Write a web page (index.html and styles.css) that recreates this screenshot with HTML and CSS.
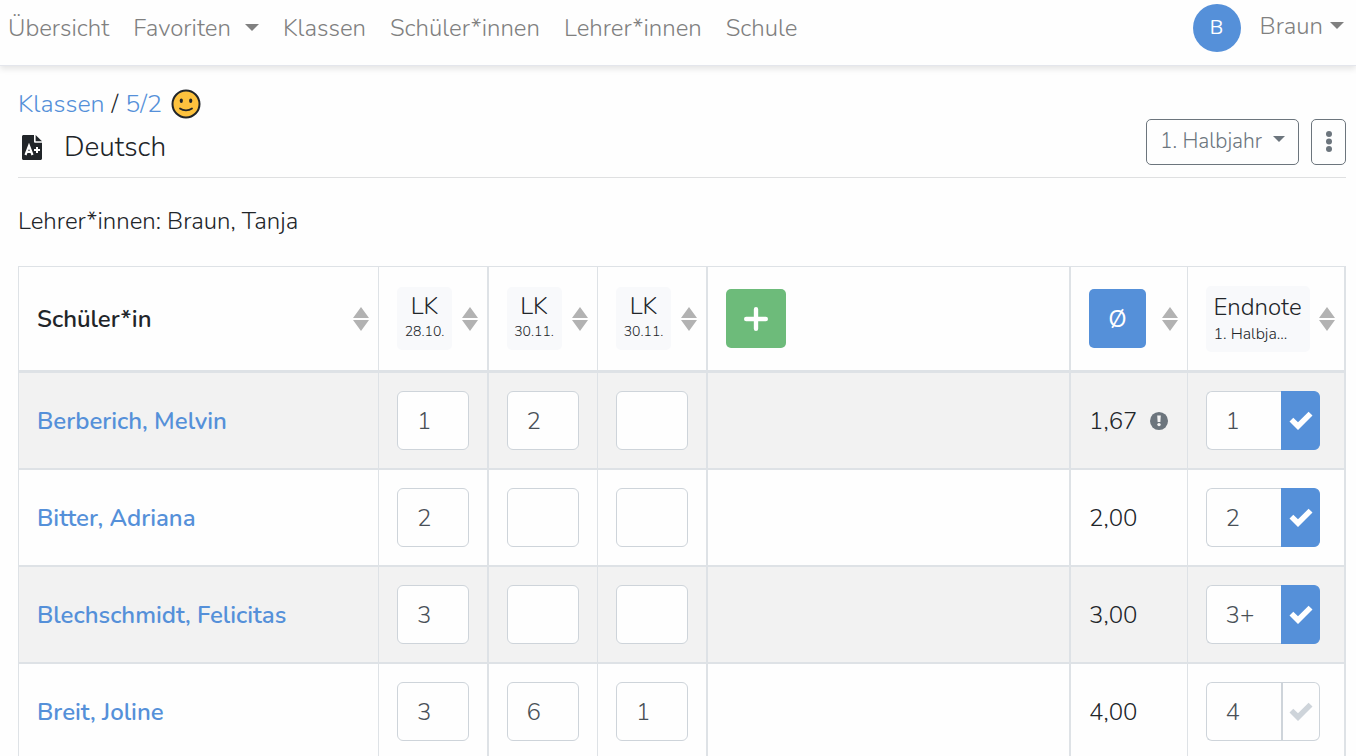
FILE: index.html
```
<!DOCTYPE html>
<html lang="de">
<head>
  <meta charset="UTF-8" />
  <meta name="viewport" content="width=device-width, initial-scale=1.0"/>
  <title>Deutsch - Klasse 5/2</title>
  <link rel="stylesheet" href="styles.css">
</head>
<body>
  <!-- shared icons -->
  <svg class="sprite" aria-hidden="true">
    <symbol id="icon-check" viewBox="0 0 24 20">
      <path d="M.5 10.500L4.300 6.700l4.700 4.600L19.600.700l3.900 3.900L9 19z"/>
    </symbol>
    <symbol id="icon-sort" viewBox="0 0 16 24">
      <path d="M8 0l8 11H0zM8 24L0 13h16z"/>
    </symbol>
  </svg>

  <nav class="navbar">
    <a href="#" class="nav-link">Übersicht</a>
    <a href="#" class="nav-link dropdown">Favoriten</a>
    <a href="#" class="nav-link">Klassen</a>
    <a href="#" class="nav-link">Schüler*innen</a>
    <a href="#" class="nav-link">Lehrer*innen</a>
    <a href="#" class="nav-link">Schule</a>
    <div class="user">
      <span class="avatar">B</span>
      <a href="#" class="nav-link user-link">Braun</a>
    </div>
  </nav>

  <main class="content">
    <header class="page-header">
      <div class="titles">
        <div class="breadcrumb">
          <a href="#">Klassen</a>
          <span>/</span>
          <a href="#">5/2</a>
          <svg class="smiley" viewBox="0 0 30 30" aria-hidden="true">
            <circle cx="15" cy="15" r="13.5" fill="#fdc23e" stroke="#212529" stroke-width="2"/>
            <ellipse cx="10.3" cy="11.8" rx="1.6" ry="2.3" fill="#212529"/>
            <ellipse cx="19.7" cy="11.8" rx="1.6" ry="2.3" fill="#212529"/>
            <path d="M9 19.5c3.4 2.6 8.6 2.6 12 0" fill="none" stroke="#212529" stroke-width="1.8" stroke-linecap="round"/>
          </svg>
        </div>
        <h1>
          <svg class="subject-icon" viewBox="0 0 20 25" aria-hidden="true">
            <path d="M1.500 0H12v6.500c0 .8.500 1.300 1.300 1.300H20v15.700c0 .8-.7 1.500-1.500 1.500h-17C.7 25 0 24.300 0 23.500v-22C0 .7.7 0 1.500 0z" fill="#212529"/>
            <path d="M13.600 0l6.400 6.300h-6.400z" fill="#212529"/>
            <path d="M3.500 20L7 10.800 10.500 20M4.800 17h4.400" fill="none" stroke="#fff" stroke-width="2.200"/>
            <path d="M15 12v6M12 15h6" stroke="#fff" stroke-width="2"/>
          </svg>
          Deutsch
        </h1>
      </div>
      <div class="actions">
        <div class="select-wrap">
          <select aria-label="Halbjahr">
            <option>1. Halbjahr</option>
            <option>2. Halbjahr</option>
          </select>
        </div>
        <button class="btn-more" aria-label="Mehr">
          <svg viewBox="0 0 6 22" aria-hidden="true"><circle cx="3" cy="3" r="3"/><circle cx="3" cy="10.500" r="3"/><circle cx="3" cy="18" r="3"/></svg>
        </button>
      </div>
    </header>

    <p class="teachers">Lehrer*innen: Braun, Tanja</p>

    <table class="grades">
      <colgroup>
        <col class="col-name">
        <col class="col-grade">
        <col class="col-grade-wide">
        <col class="col-grade">
        <col>
        <col class="col-average">
        <col class="col-final">
      </colgroup>
      <thead>
        <tr>
          <th>
            <div class="head">Schüler*in
              <button class="sort" aria-label="Sortieren"><svg><use href="#icon-sort"/></svg></button>
            </div>
          </th>
          <th class="thick">
            <div class="head">
              <button class="exam">LK<small>28.10.</small></button>
              <button class="sort" aria-label="Sortieren"><svg><use href="#icon-sort"/></svg></button>
            </div>
          </th>
          <th>
            <div class="head">
              <button class="exam">LK<small>30.11.</small></button>
              <button class="sort" aria-label="Sortieren"><svg><use href="#icon-sort"/></svg></button>
            </div>
          </th>
          <th class="thick">
            <div class="head">
              <button class="exam">LK<small>30.11.</small></button>
              <button class="sort" aria-label="Sortieren"><svg><use href="#icon-sort"/></svg></button>
            </div>
          </th>
          <th class="thick">
            <div class="head">
              <button class="btn-add" aria-label="Hinzufügen">
                <svg viewBox="0 0 22 22" aria-hidden="true"><path d="M11 2v18M2 11h18" stroke="#fff" stroke-width="4" stroke-linecap="round"/></svg>
              </button>
            </div>
          </th>
          <th>
            <div class="head">
              <button class="btn-average">Ø</button>
              <button class="sort" aria-label="Sortieren"><svg><use href="#icon-sort"/></svg></button>
            </div>
          </th>
          <th class="thick">
            <div class="head">
              <button class="exam final">Endnote<small>1. Halbja...</small></button>
              <button class="sort" aria-label="Sortieren"><svg><use href="#icon-sort"/></svg></button>
            </div>
          </th>
        </tr>
      </thead>
      <tbody>
        <tr>
          <td><a href="#">Berberich, Melvin</a></td>
          <td class="thick"><input type="text" value="1" aria-label="LK 28.10."></td>
          <td><input type="text" value="2" aria-label="LK 30.11."></td>
          <td class="thick"><input type="text" value="" aria-label="LK 30.11."></td>
          <td class="thick"></td>
          <td>
            <div class="average">1,67
              <svg class="info" viewBox="0 0 20 20" aria-hidden="true">
                <circle cx="10" cy="10" r="10" fill="#6c757d"/>
                <path d="M8 4h4l-.5 7h-3z" fill="#f2f2f2"/>
                <circle cx="10" cy="14" r="1.900" fill="#f2f2f2"/>
              </svg>
            </div>
          </td>
          <td class="thick">
            <div class="input-group">
              <input type="text" value="1" aria-label="Endnote">
              <button class="confirm active" aria-label="Bestätigen"><svg><use href="#icon-check"/></svg></button>
            </div>
          </td>
        </tr>
        <tr>
          <td><a href="#">Bitter, Adriana</a></td>
          <td class="thick"><input type="text" value="2" aria-label="LK 28.10."></td>
          <td><input type="text" value="" aria-label="LK 30.11."></td>
          <td class="thick"><input type="text" value="" aria-label="LK 30.11."></td>
          <td class="thick"></td>
          <td><div class="average">2,00</div></td>
          <td class="thick">
            <div class="input-group">
              <input type="text" value="2" aria-label="Endnote">
              <button class="confirm active" aria-label="Bestätigen"><svg><use href="#icon-check"/></svg></button>
            </div>
          </td>
        </tr>
        <tr>
          <td><a href="#">Blechschmidt, Felicitas</a></td>
          <td class="thick"><input type="text" value="3" aria-label="LK 28.10."></td>
          <td><input type="text" value="" aria-label="LK 30.11."></td>
          <td class="thick"><input type="text" value="" aria-label="LK 30.11."></td>
          <td class="thick"></td>
          <td><div class="average">3,00</div></td>
          <td class="thick">
            <div class="input-group">
              <input type="text" value="3+" aria-label="Endnote">
              <button class="confirm active" aria-label="Bestätigen"><svg><use href="#icon-check"/></svg></button>
            </div>
          </td>
        </tr>
        <tr>
          <td><a href="#">Breit, Joline</a></td>
          <td class="thick"><input type="text" value="3" aria-label="LK 28.10."></td>
          <td><input type="text" value="6" aria-label="LK 30.11."></td>
          <td class="thick"><input type="text" value="1" aria-label="LK 30.11."></td>
          <td class="thick"></td>
          <td><div class="average">4,00</div></td>
          <td class="thick">
            <div class="input-group">
              <input type="text" value="4" aria-label="Endnote">
              <button class="confirm" aria-label="Bestätigen"><svg><use href="#icon-check"/></svg></button>
            </div>
          </td>
        </tr>
      </tbody>
    </table>
  </main>
</body>
</html>
```

FILE: styles.css
```
* {
  box-sizing: border-box;
}

html {
  scrollbar-width: none;
}

body {
  margin: 0;
  background-color: #fefefe;
  color: #212529;
  font-family: Nunito, "Open Sans", sans-serif;
  font-size: 24px;
  font-weight: 300;
  line-height: 36px;
}

a {
  color: #5590d9;
  text-decoration: none;
}

button,
input,
select {
  margin: 0;
  font: inherit;
  color: inherit;
}

button {
  padding: 0;
  border: none;
  background: none;
  cursor: pointer;
}

.sprite {
  display: none;
}

/* navbar */
.navbar {
  display: flex;
  align-items: center;
  gap: 24px;
  height: 66px;
  padding: 0 12px 10px 8px;
  background-color: #fefefe;
  border-bottom: 1px solid #e4e6ec;
  box-shadow: 0 3px 6px rgba(0, 0, 0, 0.1);
}

.nav-link {
  color: #808080;
}

.dropdown::after,
.user-link::after,
.select-wrap::after {
  content: "";
  display: inline-block;
  border-top: 7px solid;
  border-left: 7px solid transparent;
  border-right: 7px solid transparent;
}

.dropdown::after {
  margin-left: 14px;
  vertical-align: 5px;
}

.user {
  display: flex;
  align-items: center;
  gap: 19px;
  margin-left: auto;
}

.user-link {
  padding-bottom: 4px;
}

.user-link::after {
  margin-left: 7px;
  vertical-align: 5px;
}

.avatar {
  width: 48px;
  height: 48px;
  border-radius: 50%;
  background-color: #5590d9;
  color: #fff;
  font-size: 20px;
  font-weight: 400;
  line-height: 48px;
  text-align: center;
}

/* page header */
.content {
  padding: 20px 10px 0 18px;
}

.page-header {
  display: flex;
  justify-content: space-between;
  align-items: flex-end;
  padding-bottom: 12px;
  border-bottom: 1px solid #dfe0e1;
}

.breadcrumb {
  display: flex;
  align-items: center;
  gap: 7px;
  font-size: 25px;
}

.smiley {
  width: 30px;
  height: 30px;
  margin-left: 2px;
}

h1 {
  display: flex;
  align-items: center;
  gap: 22px;
  margin: 7px 0 0;
  padding-left: 4px;
  font-size: 28px;
  font-weight: 300;
  line-height: 36px;
}

.subject-icon {
  width: 20px;
  height: 25px;
}

.actions {
  display: flex;
  gap: 12px;
}

.select-wrap {
  position: relative;
  color: #6c757d;
}

.select-wrap select {
  width: 153px;
  height: 46px;
  padding: 0 13px 2px;
  border: 1px solid #6c757d;
  border-radius: 5px;
  background: none;
  font-size: 21px;
  appearance: none;
}

.select-wrap::after {
  position: absolute;
  top: 17px;
  right: 14px;
  border-width: 6px 6px 0;
  pointer-events: none;
}

.btn-more {
  display: flex;
  align-items: center;
  justify-content: center;
  width: 35px;
  height: 46px;
  border: 1px solid #6c757d;
  border-radius: 5px;
}

.btn-more svg {
  width: 6px;
  height: 22px;
  fill: #6c757d;
}

.teachers {
  margin: 25px 0 27px;
}

/* grades table */
.grades {
  width: 100%;
  border-collapse: collapse;
  table-layout: fixed;
}

.col-name {
  width: 360px;
}

.col-grade {
  width: 109px;
}

.col-grade-wide {
  width: 110px;
}

.col-average {
  width: 117px;
}

.col-final {
  width: 158px;
}

th,
td {
  height: 97px;
  padding: 18px;
  border: 1px solid #dee2e6;
  border-bottom-width: 2px;
  text-align: left;
}

th {
  height: 105px;
  padding: 0 9px 0 18px;
  border-bottom-width: 3px;
  font-weight: 600;
}

.thick {
  border-right-width: 2px;
}

tbody tr:nth-child(odd) {
  background-color: #f2f2f2;
}

td a {
  font-weight: 600;
}

.head {
  display: flex;
  align-items: center;
  justify-content: space-between;
}

.sort,
.sort svg {
  display: block;
  width: 16px;
  height: 24px;
  fill: #b2b2b2;
}

.exam {
  display: flex;
  flex-direction: column;
  align-items: center;
  width: 55px;
  padding: 4px 0 7px;
  border-radius: 5px;
  background-color: #f8f9fb;
  font-weight: 300;
  line-height: 30px;
}

.exam small {
  font-size: 14px;
  line-height: 22px;
}

.final {
  align-items: flex-start;
  width: 104px;
  padding: 6px 8px;
}

.final small {
  font-size: 16px;
  line-height: 24px;
}

.btn-add,
.btn-average {
  display: flex;
  align-items: center;
  justify-content: center;
  width: 60px;
  height: 59px;
  border-radius: 5px;
  background-color: #6dbb7a;
}

.btn-add svg {
  width: 24px;
  height: 24px;
}

.btn-average {
  width: 57px;
  background-color: #5590d9;
  color: #fff;
  font-weight: 400;
}

td input {
  display: block;
  width: 72px;
  height: 59px;
  padding: 0 19px;
  border: 1px solid #ced4da;
  border-radius: 6px;
  background-color: #fefefe;
  color: #495057;
}

.average {
  display: flex;
  align-items: center;
  gap: 13px;
}

.info {
  width: 20px;
  height: 20px;
}

.input-group {
  display: flex;
}

.input-group input {
  width: 75px;
  border-right: none;
  border-radius: 6px 0 0 6px;
}

.confirm {
  display: flex;
  align-items: center;
  justify-content: center;
  width: 39px;
  height: 59px;
  border: 1px solid #ced4da;
  border-left-width: 2px;
  border-radius: 0 6px 6px 0;
  color: #ced4da;
}

.confirm svg {
  width: 24px;
  height: 20px;
  fill: currentColor;
}

.confirm.active {
  border-color: #5590d9;
  background-color: #5590d9;
  color: #fff;
}
```
